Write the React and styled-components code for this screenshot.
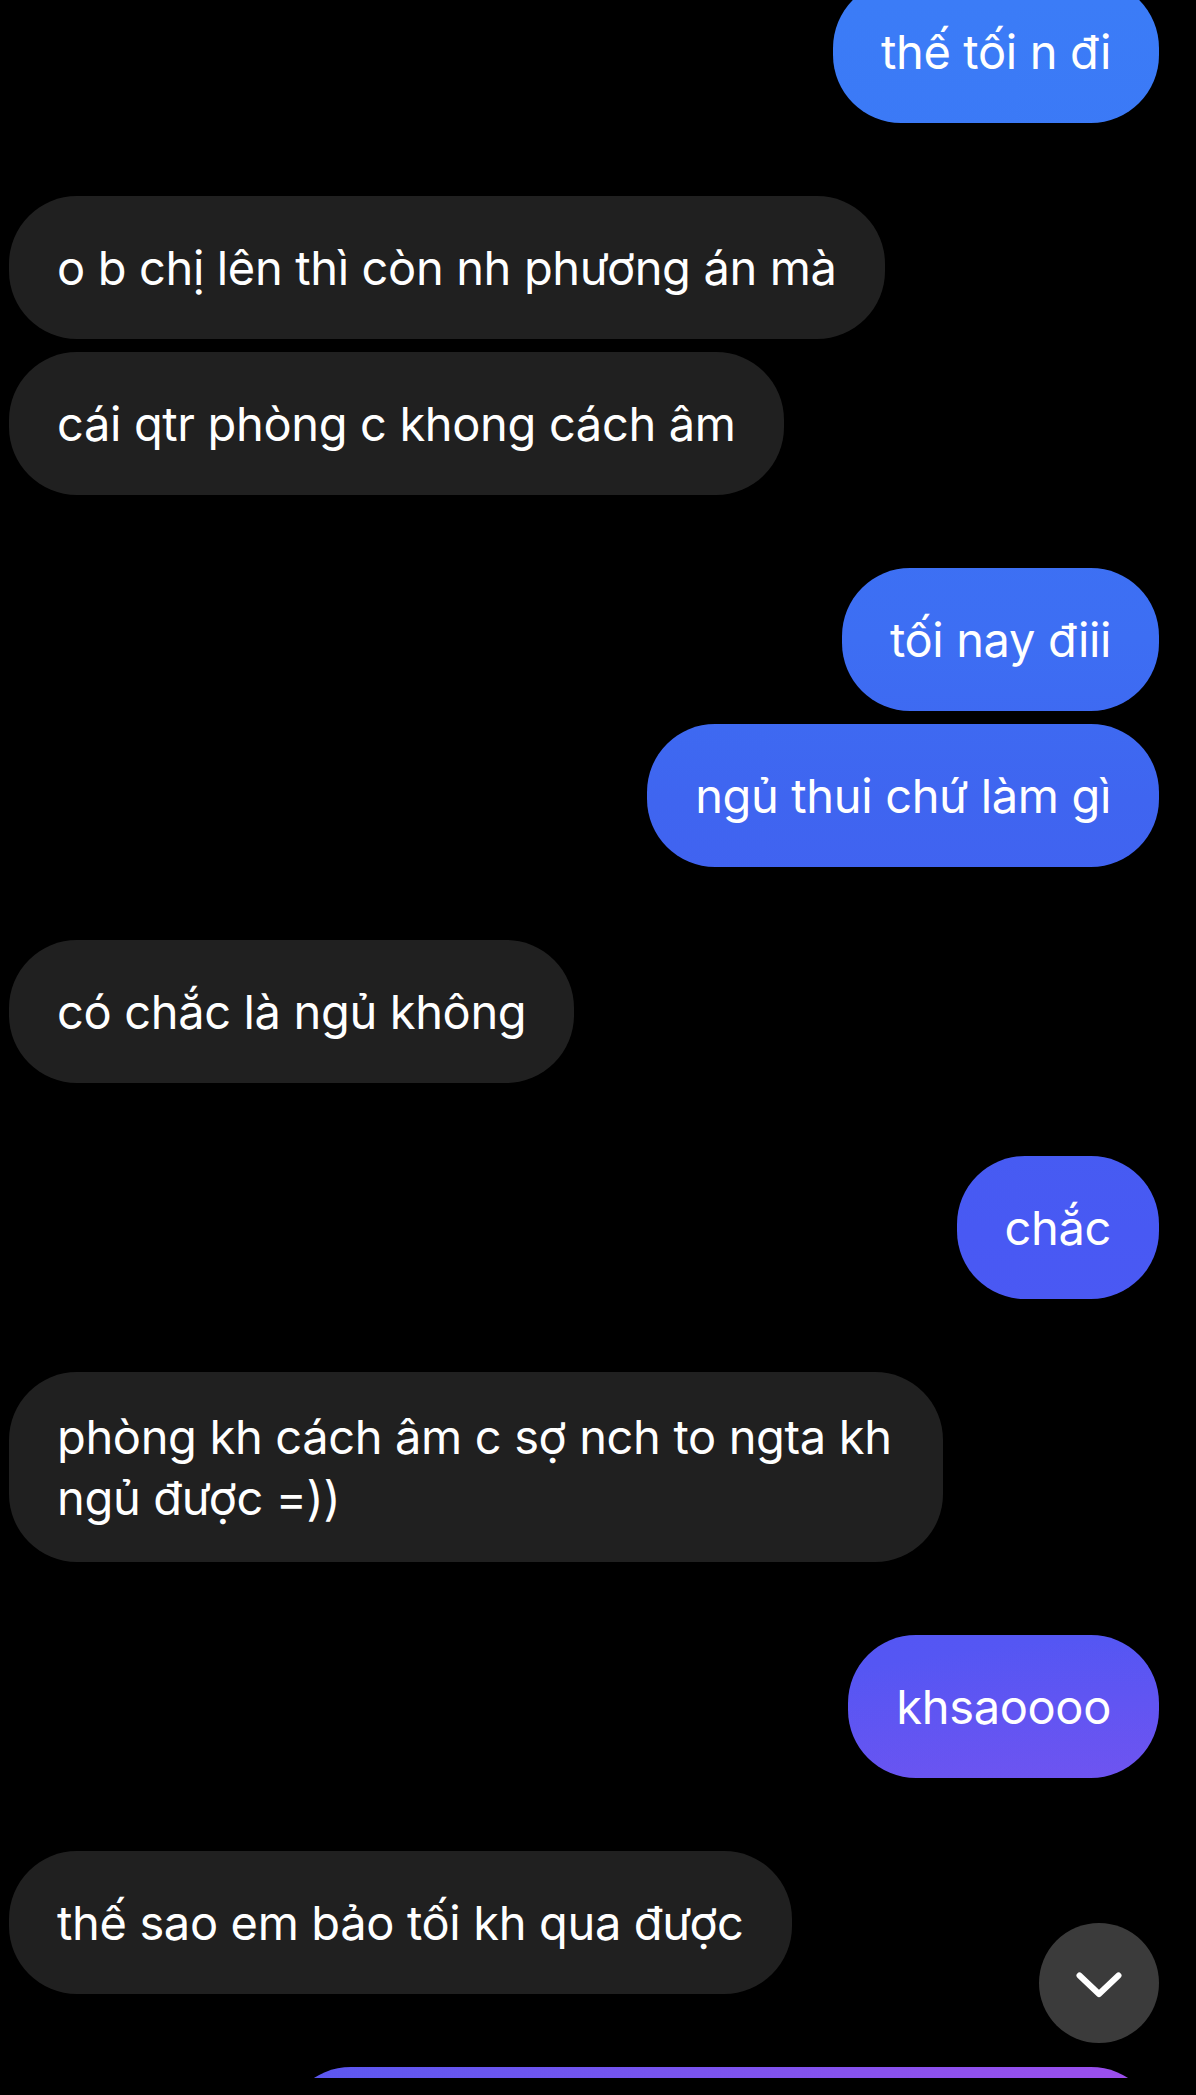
import React from "react";
import styled, { createGlobalStyle } from "styled-components";

const GlobalStyle = createGlobalStyle`
  html, body {
    margin: 0;
    padding: 0;
    background: #000;
  }
  body {
    font-family: Inter, "Noto Sans", "Liberation Sans", sans-serif;
    -webkit-font-smoothing: antialiased;
  }
`;

// fixed gradient, like messenger: each bubble shows its own slice of the screen
const sentGradient = `
  radial-gradient(ellipse 900px 460px at 1196px 2095px, rgba(162, 78, 236, 1), rgba(162, 78, 236, 0)),
  linear-gradient(to bottom, #3b7cf7 0px, #3d6ef3 640px, #3f65f0 800px, #4859f3 1230px, #5656f3 1700px, #5b58f0 2095px)
`;

const messages = [
  { mine: true, items: ["thế tối n đi"] },
  {
    mine: false,
    items: ["o b chị lên thì còn nh phương án mà", "cái qtr phòng c khong cách âm"],
  },
  { mine: true, items: ["tối nay điii", "ngủ thui chứ làm gì"] },
  { mine: false, items: ["có chắc là ngủ không"] },
  { mine: true, items: ["chắc"] },
  { mine: false, items: ["phòng kh cách âm c sợ nch to ngta kh ngủ được =))"] },
  { mine: true, items: ["khsaoooo"] },
  { mine: false, items: ["thế sao em bảo tối kh qua được"] },
];

export default function App() {
  return (
    <>
      <GlobalStyle />
      <Screen>
        <Thread>
          {messages.map((group, i) => (
            <Group key={i} $mine={group.mine}>
              {group.items.map((text, j) => (
                <Bubble key={j} $mine={group.mine}>
                  {text}
                </Bubble>
              ))}
            </Group>
          ))}
          <Group $mine>
            <Bubble $mine $width={876} />
          </Group>
        </Thread>

        <ScrollDown aria-label="scroll to bottom">
          <svg width="46" height="26" viewBox="0 0 46 26" fill="none">
            <path
              d="M3.5 3.5 L23 22 L42.5 3.5"
              stroke="#fff"
              strokeWidth="6"
              strokeLinecap="round"
              strokeLinejoin="round"
            />
          </svg>
        </ScrollDown>
      </Screen>
    </>
  );
}

const Screen = styled.div`
  position: relative;
  height: 2078px;
  overflow: hidden;
  background: #000;
`;

const Thread = styled.div`
  display: flex;
  flex-direction: column;
  gap: 73px;
  margin-top: -20px;
  padding: 0 37px 0 9px;
`;

const Group = styled.div`
  display: flex;
  flex-direction: column;
  gap: 13px;
  align-items: ${(p) => (p.$mine ? "flex-end" : "flex-start")};
`;

const Bubble = styled.div`
  box-sizing: border-box;
  display: flex;
  align-items: center;
  min-height: 143px;
  max-width: 934px;
  width: ${(p) => (p.$width ? `${p.$width}px` : "auto")};
  padding: 34px 48px;
  border-radius: 68px;
  font-size: 47px;
  line-height: 61px;
  letter-spacing: -0.35px;
  color: #fff;
  background: ${(p) => (p.$mine ? sentGradient : "#202020")};
  background-attachment: ${(p) => (p.$mine ? "fixed" : "scroll")};
`;

const ScrollDown = styled.button`
  position: absolute;
  right: 37px;
  bottom: 35px;
  width: 120px;
  height: 120px;
  border: none;
  border-radius: 50%;
  background: #3b3b3b;
  display: flex;
  align-items: center;
  justify-content: center;
  padding: 0;
  padding-top: 4px;
  cursor: pointer;
`;
